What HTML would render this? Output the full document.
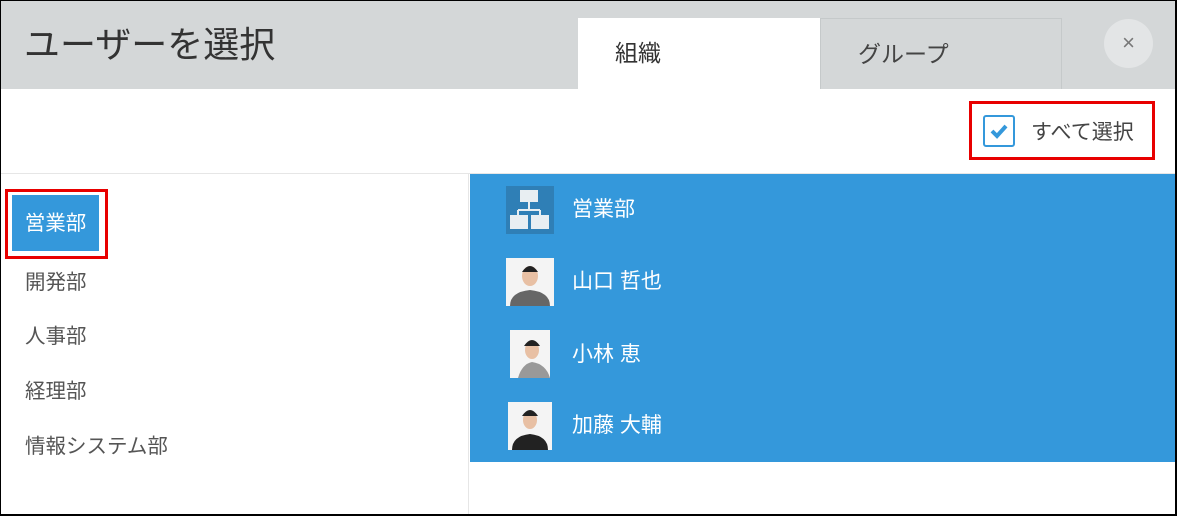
<!DOCTYPE html>
<html><head><meta charset="utf-8"><style>
*{box-sizing:border-box;margin:0;padding:0}
body{width:1177px;height:516px;overflow:hidden;background:#fff;font-family:"Liberation Sans","Noto Sans CJK JP",sans-serif;position:relative}
.frame{position:absolute;left:0;top:0;width:1177px;height:516px;border:1px solid #000;border-right-width:2px;border-bottom-width:2px}
.hdr{position:absolute;left:0;top:0;width:1177px;height:89px;background:#d4d7d8}
.title{position:absolute;left:24px;top:16px;font-size:36px;color:#333}
.tab{position:absolute;top:18px;height:71px;font-size:23px;color:#333;padding-left:37px;line-height:70px}
.t1{left:578px;width:243px;background:#fff}
.t2{left:820px;width:242px;background:#d4d7d8;border:1px solid #c5c9ca;border-bottom:none;color:#444}
.close{position:absolute;left:1104px;top:19px;width:49px;height:49px;border-radius:50%;background:#e3e5e6;color:#777;font-size:22px;text-align:center;line-height:47px}
.sel{position:absolute;left:969px;top:101px;width:186px;height:59px;border:3px solid #e80000}
.cb{position:absolute;left:983px;top:115px;width:32px;height:32px;border:2px solid #3498db;border-radius:3px;background:#fff}
.selt{position:absolute;left:1031px;top:116px;font-size:21px;color:#444}
.hline{position:absolute;left:0;top:173px;width:1177px;height:1px;background:#e6e6e6}
.vline{position:absolute;left:468px;top:174px;width:1px;height:342px;background:#e6e6e6}
.li{position:absolute;left:25px;font-size:20.5px;color:#555}
.act{position:absolute;left:12px;top:195px;width:87px;height:56px;background:#3498db;color:#fff;font-size:20.5px;line-height:58px;text-align:center}
.actb{position:absolute;left:5px;top:189px;width:103px;height:70px;border:3px solid #e80000}
.blue{position:absolute;left:470px;top:174px;width:705px;height:288px;background:#3498db}
.row{position:absolute;left:572px;font-size:21px;color:#fff}
.ph{position:absolute;background:#f4f4f4;overflow:hidden}
</style></head><body>
<div class="hdr"></div>
<div class="title">ユーザーを選択</div>
<div class="tab t1">組織</div>
<div class="tab t2">グループ</div>
<div class="close">×</div>
<div class="sel"></div>
<div class="cb"><svg width="28" height="28" viewBox="0 0 28 28"><path d="M7 14l5 5 9-10" stroke="#3498db" stroke-width="4" fill="none"/></svg></div>
<div class="selt">すべて選択</div>
<div class="hline"></div>
<div class="vline"></div>
<div class="actb"></div>
<div class="act">営業部</div>
<div class="li" style="top:265px">開発部</div>
<div class="li" style="top:319px">人事部</div>
<div class="li" style="top:374px">経理部</div>
<div class="li" style="top:429px">情報システム部</div>
<div class="blue"></div>
<div style="position:absolute;left:506px;top:186px;width:48px;height:48px;background:#2f7fb6">
<svg width="48" height="48"><rect x="14" y="4" width="18" height="12" fill="#e8eef2"/><path d="M23 16v8M12 24h22M12 24v6M34 24v6" stroke="#e8eef2" stroke-width="2" fill="none"/><rect x="4" y="29" width="18" height="14" fill="#e8eef2"/><rect x="25" y="29" width="18" height="14" fill="#e8eef2"/></svg></div>
<div class="row" style="top:193px">営業部</div>
<div class="ph" style="left:506px;top:258px;width:48px;height:48px"><svg width="48" height="48"><ellipse cx="24" cy="18" rx="8" ry="10" fill="#e8c0a4"/><path d="M16 14q8-12 16 0" fill="#222"/><path d="M4 48q0-14 20-16q20 2 20 16z" fill="#666"/></svg></div>
<div class="row" style="top:265px">山口 哲也</div>
<div class="ph" style="left:510px;top:330px;width:40px;height:48px"><svg width="40" height="48"><ellipse cx="22" cy="20" rx="7" ry="9" fill="#e8c0a4"/><path d="M14 16q8-12 16 0" fill="#222"/><path d="M8 48q4-14 14-16q14 2 18 16z" fill="#999"/></svg></div>
<div class="row" style="top:338px">小林 恵</div>
<div class="ph" style="left:508px;top:402px;width:44px;height:48px"><svg width="44" height="48"><ellipse cx="22" cy="18" rx="7" ry="9" fill="#e8c0a4"/><path d="M14 14q8-12 16 0" fill="#222"/><path d="M4 48q0-14 18-16q18 2 18 16z" fill="#222"/></svg></div>
<div class="row" style="top:409px">加藤 大輔</div>
<div class="frame"></div>
</body></html>
